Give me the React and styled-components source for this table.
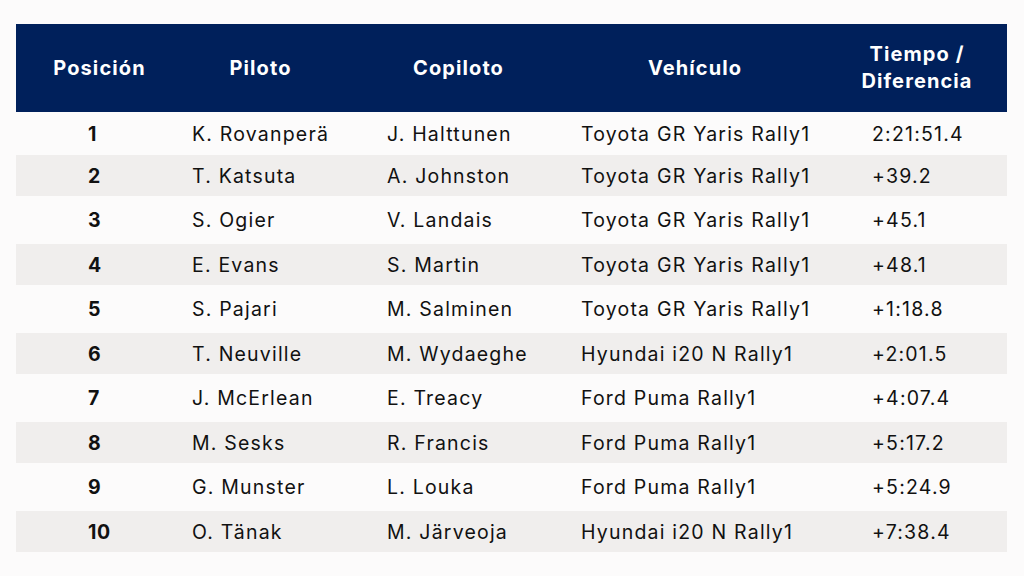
import React from "react";
import styled, { createGlobalStyle } from "styled-components";

const GlobalStyle = createGlobalStyle`
  html, body {
    margin: 0;
    padding: 0;
    background: #fcfbfb;
  }
  body {
    font-family: "Inter", "Liberation Sans", sans-serif;
    color: #111;
  }
`;

const Page = styled.div`
  width: 1024px;
  height: 576px;
  padding: 24px 17px 0 16px;
  box-sizing: border-box;
`;

const COLS = "147px 195px 195px 290px 1fr";

const Header = styled.div`
  display: grid;
  grid-template-columns: ${COLS};
  height: 88px;
  background: #00205b;
  color: #fff;
  align-items: center;
`;

const HeadCell = styled.div`
  text-align: center;
  font-weight: 700;
  font-size: 20px;
  letter-spacing: 1.1px;
  line-height: 27px;
  padding-left: ${(p) => p.$pl || 0}px;
  padding-right: ${(p) => p.$pr || 0}px;
`;

const Body = styled.div`
  display: flex;
  flex-direction: column;
`;

const Row = styled.div`
  display: grid;
  grid-template-columns: ${COLS};
  height: ${(p) => (p.$striped ? 41 : 48)}px;
  align-items: center;
  background: ${(p) => (p.$striped ? "#f0eeed" : "transparent")};

  &:first-child {
    height: 43px;
  }
`;

const Cell = styled.div`
  font-size: 19.5px;
  letter-spacing: ${(p) => (p.$bold ? 0.6 : 1.2)}px;
  font-weight: ${(p) => (p.$bold ? 700 : 400)};
  padding-left: ${(p) => p.$pl}px;
  white-space: nowrap;
`;

const rows = [
  ["1", "K. Rovanperä", "J. Halttunen", "Toyota GR Yaris Rally1", "2:21:51.4"],
  ["2", "T. Katsuta", "A. Johnston", "Toyota GR Yaris Rally1", "+39.2"],
  ["3", "S. Ogier", "V. Landais", "Toyota GR Yaris Rally1", "+45.1"],
  ["4", "E. Evans", "S. Martin", "Toyota GR Yaris Rally1", "+48.1"],
  ["5", "S. Pajari", "M. Salminen", "Toyota GR Yaris Rally1", "+1:18.8"],
  ["6", "T. Neuville", "M. Wydaeghe", "Hyundai i20 N Rally1", "+2:01.5"],
  ["7", "J. McErlean", "E. Treacy", "Ford Puma Rally1", "+4:07.4"],
  ["8", "M. Sesks", "R. Francis", "Ford Puma Rally1", "+5:17.2"],
  ["9", "G. Munster", "L. Louka", "Ford Puma Rally1", "+5:24.9"],
  ["10", "O. Tänak", "M. Järveoja", "Hyundai i20 N Rally1", "+7:38.4"],
];

const pads = [72, 29, 29, 28, 29];

export default function App() {
  return (
    <Page>
      <GlobalStyle />
      <Header>
        <HeadCell $pl={20}>Posición</HeadCell>
        <HeadCell>Piloto</HeadCell>
        <HeadCell $pl={6}>Copiloto</HeadCell>
        <HeadCell $pr={6}>Vehículo</HeadCell>
        <HeadCell $pr={16}>
          Tiempo /<br />
          Diferencia
        </HeadCell>
      </Header>
      <Body>
        {rows.map((r, i) => (
          <Row key={i} $striped={i % 2 === 1}>
            {r.map((c, j) => (
              <Cell key={j} $pl={pads[j]} $bold={j === 0}>
                {c}
              </Cell>
            ))}
          </Row>
        ))}
      </Body>
    </Page>
  );
}
